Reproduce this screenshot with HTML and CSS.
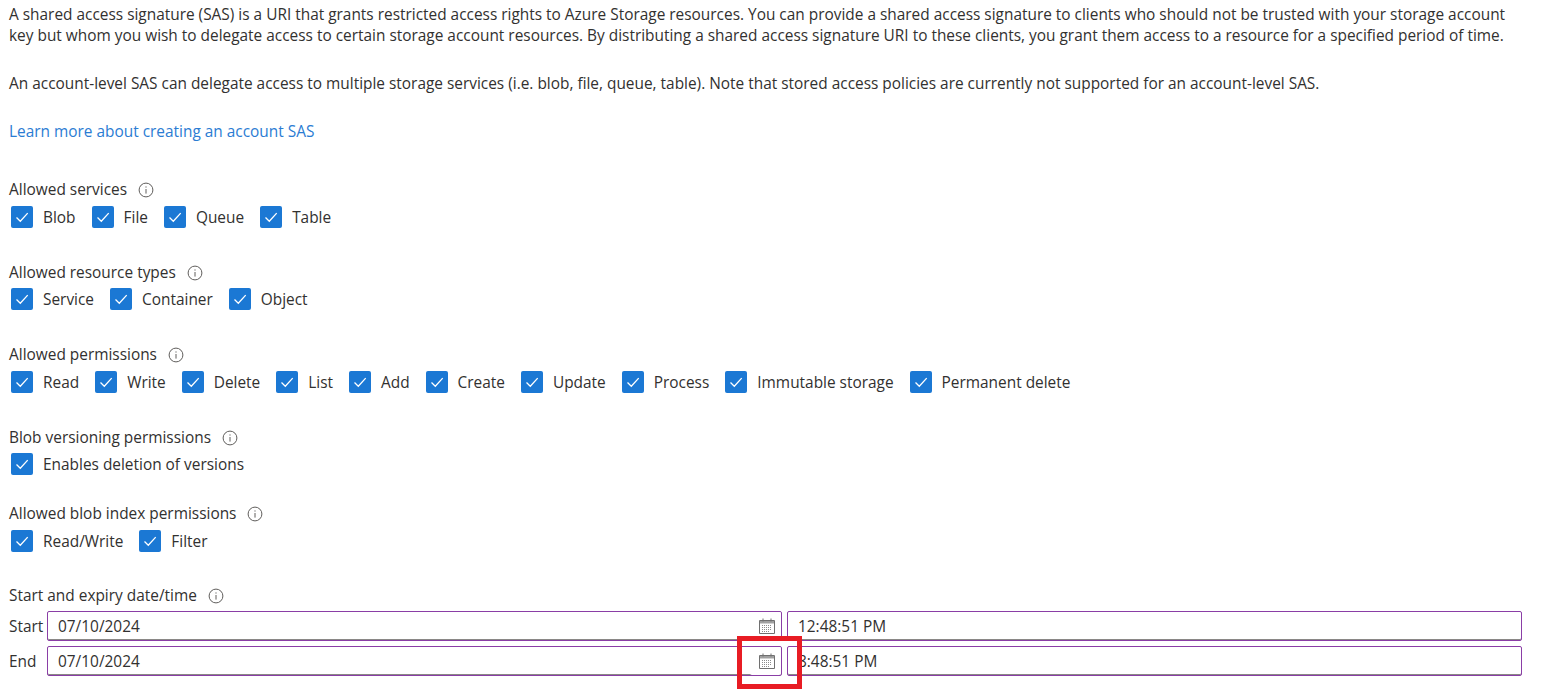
FILE: index.html
```html
<!DOCTYPE html>
<html lang="en">
<head>
  <meta charset="UTF-8">
  <title>Shared access signature</title>
  <link rel="stylesheet" href="styles.css">
</head>
<body>
  <svg class="defs" width="0" height="0">
    <symbol id="check" viewBox="0 0 22 22"><path d="M5.5 11.5l3.8 3.8 7.4-8.2" fill="none" stroke="#fff" stroke-width="1.3"/></symbol>
    <symbol id="info" viewBox="0 0 16 16"><circle cx="8" cy="8" r="6.9" fill="none" stroke="#605e5c" stroke-width="1"/><path d="M8 7v4.6M8 4.4v1.2" fill="none" stroke="#605e5c" stroke-width="1"/></symbol>
    <symbol id="cal" viewBox="0 0 16 16"><path d="M.5 2.5h15v13H.5z" fill="#fff" stroke="#707070"/><path d="M1 3h14v2.5H1z" fill="#a0a0a0"/><path d="M4 .5v3M12 .5v3" fill="none" stroke="#707070"/><path d="M3 7.5h10M3 9.5h10M3 11.5h10M3 13.5h8" fill="none" stroke="#8c8c8c" stroke-width="1" stroke-dasharray="1 1"/></symbol>
  </svg>

  <div class="page">
    <p class="intro">A shared access signature (SAS) is a URI that grants restricted access rights to Azure Storage resources. You can provide a shared access signature to clients who should not be trusted with your storage account key but whom you wish to delegate access to certain storage account resources. By distributing a shared access signature URI to these clients, you grant them access to a resource for a specified period of time.</p>
    <p class="intro">An account-level SAS can delegate access to multiple storage services (i.e. blob, file, queue, table). Note that stored access policies are currently not supported for an account-level SAS.</p>
    <a class="learn" href="#">Learn more about creating an account SAS</a>

    <div class="group group-services">
      <div class="label">Allowed services <svg class="info"><use href="#info"/></svg></div>
      <div class="checks">
        <label class="check"><span class="box"><svg><use href="#check"/></svg></span>Blob</label>
        <label class="check"><span class="box"><svg><use href="#check"/></svg></span>File</label>
        <label class="check"><span class="box"><svg><use href="#check"/></svg></span>Queue</label>
        <label class="check"><span class="box"><svg><use href="#check"/></svg></span>Table</label>
      </div>
    </div>

    <div class="group">
      <div class="label">Allowed resource types <svg class="info"><use href="#info"/></svg></div>
      <div class="checks checks-tight">
        <label class="check"><span class="box"><svg><use href="#check"/></svg></span>Service</label>
        <label class="check"><span class="box"><svg><use href="#check"/></svg></span>Container</label>
        <label class="check"><span class="box"><svg><use href="#check"/></svg></span>Object</label>
      </div>
    </div>

    <div class="group">
      <div class="label">Allowed permissions <svg class="info"><use href="#info"/></svg></div>
      <div class="checks">
        <label class="check"><span class="box"><svg><use href="#check"/></svg></span>Read</label>
        <label class="check"><span class="box"><svg><use href="#check"/></svg></span>Write</label>
        <label class="check"><span class="box"><svg><use href="#check"/></svg></span>Delete</label>
        <label class="check"><span class="box"><svg><use href="#check"/></svg></span>List</label>
        <label class="check"><span class="box"><svg><use href="#check"/></svg></span>Add</label>
        <label class="check"><span class="box"><svg><use href="#check"/></svg></span>Create</label>
        <label class="check"><span class="box"><svg><use href="#check"/></svg></span>Update</label>
        <label class="check"><span class="box"><svg><use href="#check"/></svg></span>Process</label>
        <label class="check"><span class="box"><svg><use href="#check"/></svg></span>Immutable storage</label>
        <label class="check"><span class="box"><svg><use href="#check"/></svg></span>Permanent delete</label>
      </div>
    </div>

    <div class="group">
      <div class="label">Blob versioning permissions <svg class="info"><use href="#info"/></svg></div>
      <div class="checks checks-tight">
        <label class="check"><span class="box"><svg><use href="#check"/></svg></span>Enables deletion of versions</label>
      </div>
    </div>

    <div class="group group-tight">
      <div class="label">Allowed blob index permissions <svg class="info"><use href="#info"/></svg></div>
      <div class="checks">
        <label class="check"><span class="box"><svg><use href="#check"/></svg></span>Read/Write</label>
        <label class="check"><span class="box"><svg><use href="#check"/></svg></span>Filter</label>
      </div>
    </div>

    <div class="group group-dates">
      <div class="label">Start and expiry date/time <svg class="info"><use href="#info"/></svg></div>
      <div class="date-row">
        <span class="date-label">Start</span>
        <div class="field"><span>07/10/2024</span><span class="cal-btn"><svg class="cal"><use href="#cal"/></svg></span></div>
        <div class="field"><span>12:48:51 PM</span></div>
      </div>
      <div class="date-row">
        <span class="date-label">End</span>
        <div class="field"><span>07/10/2024</span><span class="cal-btn"><svg class="cal"><use href="#cal"/></svg></span></div>
        <div class="field"><span>8:48:51 PM</span></div>
      </div>
    </div>
  </div>

  <div class="highlight"></div>
</body>
</html>
```

FILE: styles.css
```css
* { margin: 0; padding: 0; box-sizing: border-box; }
body {
  background: white;
  color: #323130;
  font-family: "Open Sans", sans-serif;
  font-size: 15.42px;
  line-height: 21px;
  height: 690px;
  overflow: hidden;
  position: relative;
}
.defs {
  position: absolute;
}
.page {
  width: 1522px;
  padding: 4px 0 0 9px;
}
.intro {
  margin-bottom: 27px;
}
.learn {
  display: block;
  color: #2b7cd3;
  text-decoration: none;
}
.group {
  margin-top: 34px;
}
.group-services {
  margin-top: 37px;
}
.group-tight {
  margin-top: 28px;
}
.group-dates {
  margin-top: 33px;
}
.label {
  display: flex;
  align-items: center;
  gap: 11px;
  height: 21px;
}
.info {
  width: 16px;
  height: 16px;
}
.checks {
  display: flex;
  gap: 16px;
  margin-top: 6px;
  padding-left: 2px;
}
.checks-tight {
  margin-top: 5px;
}
.check {
  display: flex;
  align-items: center;
  gap: 10px;
  height: 22px;
}
.box {
  width: 22px;
  height: 22px;
  background: #1b78d4;
  border-radius: 2px;
}
.box svg {
  display: block;
  width: 22px;
  height: 22px;
}
.group-dates .label {
  margin-bottom: 5px;
}
.date-row {
  display: flex;
  align-items: center;
  gap: 5px;
  margin-bottom: 5px;
}
.date-label {
  width: 33px;
}
.field {
  flex: 1;
  height: 30px;
  display: flex;
  align-items: center;
  justify-content: space-between;
  padding-left: 10px;
  border: 1px solid #8a3ea6;
  border-radius: 2px;
  box-shadow: inset 0 -1px 0 #8a8886;
}
.cal-btn {
  align-self: stretch;
  width: 31px;
  padding-right: 6px;
  background: white;
  display: flex;
  align-items: center;
  justify-content: flex-end;
  border-radius: 2px;
}
.cal {
  width: 16px;
  height: 16px;
}
.highlight {
  position: absolute;
  left: 737px;
  top: 636px;
  width: 65px;
  height: 53px;
  border: 5px solid #e81c24;
}
```
